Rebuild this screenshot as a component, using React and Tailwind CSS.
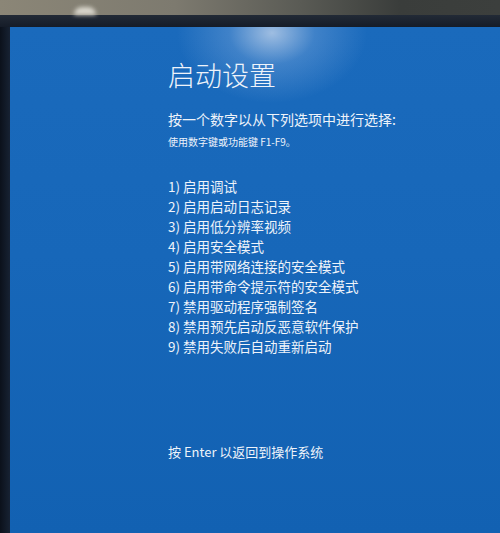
const options = [
  '启用调试',
  '启用启动日志记录',
  '启用低分辨率视频',
  '启用安全模式',
  '启用带网络连接的安全模式',
  '启用带命令提示符的安全模式',
  '禁用驱动程序强制签名',
  '禁用预先启动反恶意软件保护',
  '禁用失败后自动重新启动',
];

const font = 'font-["Segoe_UI","Noto_Sans_CJK_SC","Noto_Sans",sans-serif]';

export default function App() {
  return (
    <div className={`flex h-[533px] w-[500px] flex-col overflow-hidden bg-[#101722] ${font}`}>
      {/* room behind the monitor */}
      <div className="relative h-[15px] shrink-0 bg-[linear-gradient(90deg,#8b8677_0%,#7d7a6f_35%,#5a5b55_60%,#3a3d3b_80%,#3c3f3d_100%)]">
        <div className="absolute left-[74px] top-[7px] h-[8px] w-[22px] rounded-t-full bg-[#d9d6cc] blur-[2px]" />
      </div>
      {/* top bezel */}
      <div className="h-[12px] shrink-0 bg-[linear-gradient(180deg,#222a36,#151c28)]" />
      <div className="flex flex-1">
        {/* left bezel */}
        <div className="w-[10px] shrink-0 bg-[linear-gradient(90deg,#0b111b,#172233)]" />
        {/* screen */}
        <div className="flex-1 bg-[radial-gradient(ellipse_95px_70px_at_262px_6px,rgba(215,225,242,0.7),rgba(150,185,230,0.3)_45%,transparent),linear-gradient(180deg,#1a6abc_0%,#1767b9_45%,#1261b2_100%)] pl-[158px] pt-[30px] text-[#eef3fa]">
          <h1 className="text-[27px] font-light leading-[36px]">启动设置</h1>
          <p className="mt-[16px] text-[14px] leading-[20px]">按一个数字以从下列选项中进行选择:</p>
          <p className="mt-[6px] text-[10px] leading-[14px]">使用数字键或功能键 F1-F9。</p>
          <ul className="mt-[27px]">
            {options.map((o, i) => (
              <li key={o} className="text-[13.5px] leading-[20px]">
                {i + 1}) {o}
              </li>
            ))}
          </ul>
          <p className="mt-[86px] text-[13px] leading-[20px]">按 Enter 以返回到操作系统</p>
        </div>
      </div>
    </div>
  );
}
